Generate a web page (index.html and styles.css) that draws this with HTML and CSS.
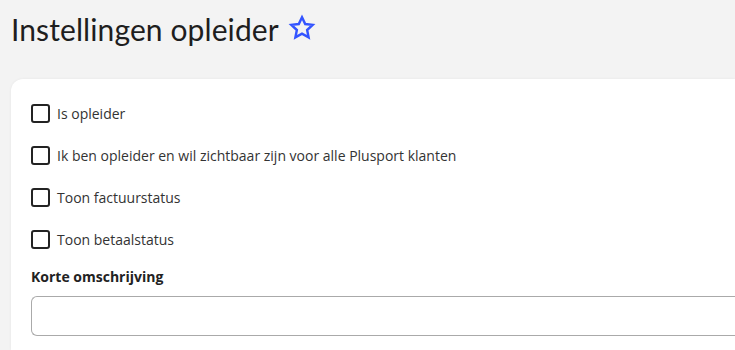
FILE: index.html
```html
<!DOCTYPE html>
<html lang="nl">
<head>
<meta charset="utf-8">
<title>Instellingen opleider</title>
<link rel="stylesheet" href="styles.css">
</head>
<body>
<div class="page">
  <header class="page-header">
    <h1 class="title">Instellingen opleider</h1>
    <svg class="star" viewBox="0 0 24 24" width="28" height="28" aria-hidden="true">
      <path d="M12 2.8l2.75 5.8 6.35.75-4.7 4.35 1.25 6.3L12 16.85 6.35 20l1.25-6.3-4.7-4.35 6.35-.75z" fill="none" stroke="#3354ff" stroke-width="2.1" stroke-linejoin="miter"/>
    </svg>
  </header>
  <main class="card">
    <label class="check-row"><span class="box"></span><span class="label">Is opleider</span></label>
    <label class="check-row"><span class="box"></span><span class="label">Ik ben opleider en wil zichtbaar zijn voor alle Plusport klanten</span></label>
    <label class="check-row"><span class="box"></span><span class="label">Toon factuurstatus</span></label>
    <label class="check-row"><span class="box"></span><span class="label">Toon betaalstatus</span></label>
    <div class="field">
      <div class="field-label">Korte omschrijving</div>
      <div class="input"></div>
    </div>
  </main>
</div>
</body>
</html>
```
FILE: styles.css
```css
html, body {
  margin: 0;
  padding: 0;
  background: #f3f3f3;
  overflow: hidden;
}
.page {
  width: 735px;
  height: 350px;
  padding-left: 11px;
  box-sizing: border-box;
  overflow: hidden;
}
.page-header {
  display: flex;
  align-items: center;
  height: 57px;
}
.title {
  margin: 0;
  font-family: Lato, "Noto Sans", sans-serif;
  font-weight: 400;
  font-size: 30px;
  color: #1e1e1e;
  line-height: 1;
  letter-spacing: 0.1px;
}
.star {
  margin-left: 9px;
  margin-top: -2px;
}
.card {
  margin-top: 22px;
  background: #fff;
  border-top-left-radius: 12px;
  box-shadow: 0 0 3px rgba(0,0,0,0.06);
  padding: 25px 0 0 20px;
  height: 271px;
  box-sizing: border-box;
  font-family: "Open Sans", sans-serif;
  color: #333;
}
.check-row {
  display: flex;
  align-items: center;
  height: 18px;
  margin-bottom: 24px;
  font-size: 14px;
}
.box {
  width: 15px;
  height: 15px;
  border: 2px solid #232323;
  border-radius: 3px;
  flex: none;
}
.label {
  margin-left: 7px;
}
.field {
  margin-top: -5px;
}
.field-label {
  font-weight: 700;
  font-size: 14px;
  color: #222;
  margin-bottom: 9px;
  line-height: 20px;
}
.input {
  height: 38px;
  border: 1px solid #aaa;
  border-right: none;
  border-radius: 6px 0 0 6px;
}
```
